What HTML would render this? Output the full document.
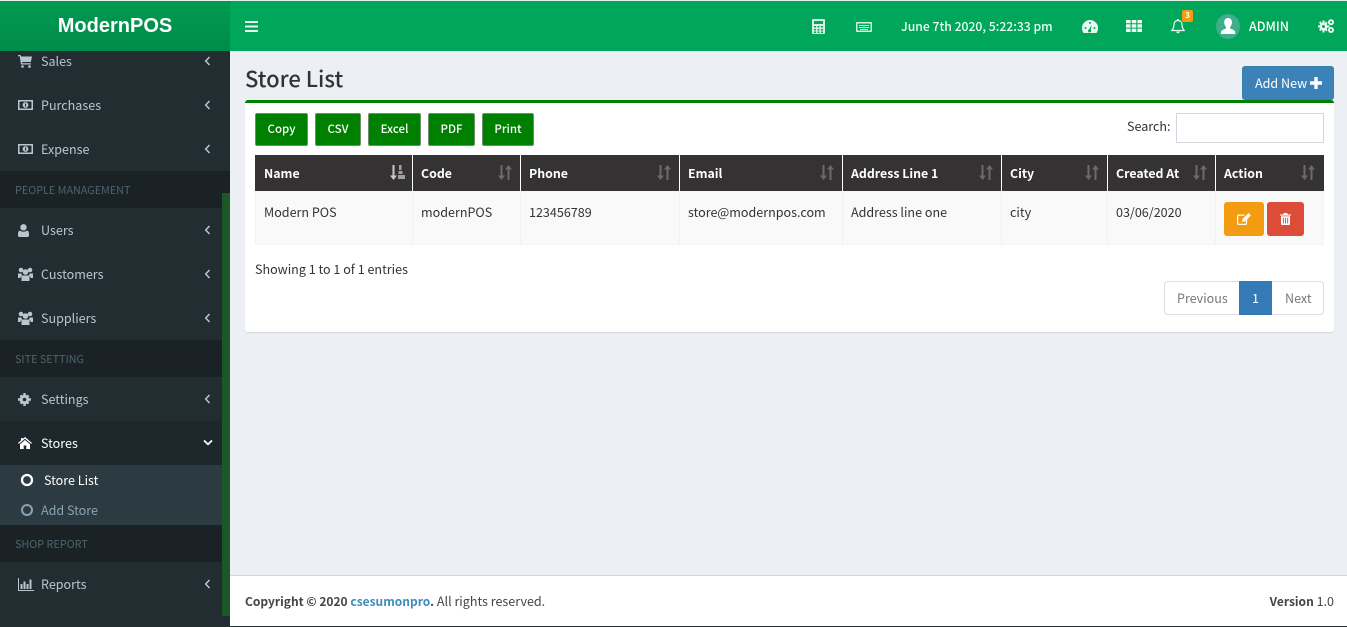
<!DOCTYPE html>
<html lang="en"><head><meta charset="utf-8"><title>Store List</title>
<style>
*{box-sizing:border-box}
html,body{margin:0;padding:0;width:1347px;height:627px;overflow:hidden;background:#ecf0f5}
body{position:relative;font-family:"Noto Sans CJK SC","Liberation Sans",sans-serif;font-size:12.55px;color:#333}
.a{position:absolute}
.t{position:absolute;white-space:nowrap;line-height:20px;height:20px}
svg{position:absolute;display:block}
.m{color:#b8c7ce}
.h{color:#4b646f;font-size:10.8px}
.th{color:#fff;font-weight:700;top:163px;font-size:12.35px}
.td{color:#333;top:202px}
.b{position:absolute;top:113px;height:33px;background:#008000;border:1px solid #6f8f6f;border-radius:2px;color:#fff;font-size:11.5px;line-height:31px;text-align:center;font-weight:500}
.hd{position:absolute;left:0;width:230px;height:37px;background:#1a2226}
.sep{position:absolute;top:155px;width:1px;height:36px;background:#fff}
.sepr{position:absolute;top:191px;width:1px;height:54px;background:#f1f1f1}
</style></head><body>

<!-- header -->
<div class="a" style="left:0;top:0;width:1347px;height:1px;background:#e6f3ec"></div>
<div class="a" style="left:230px;top:1px;width:1117px;height:50px;background:#00a65a"></div>
<div class="a" style="left:0;top:1px;width:230px;height:50px;background:linear-gradient(#009a50,#008b4b)"></div>
<div class="t" style="left:0;width:230px;text-align:center;top:11px;height:30px;line-height:30px;font-family:'Liberation Sans',sans-serif;font-weight:700;font-size:20px;color:#fff">ModernPOS</div>
<svg style="left:245px;top:21px" width="13" height="11" viewBox="0 0 13 11"><path d="M0 0h13v2H0zM0 4.500h13v2H0zM0 9h13v2H0z" fill="#e8f7ef"/></svg>

<svg style="left:812px;top:19px" width="13" height="15" viewBox="0 0 13 15"><path fill="#d5f0e2" fill-rule="evenodd" d="M1 0h11a1 1 0 0 1 1 1v13a1 1 0 0 1-1 1H1a1 1 0 0 1-1-1V1a1 1 0 0 1 1-1zM2 2v3h9V2zM2 7v1.500h2V7zm3.500 0v1.500h2V7zM9 7v1.500h2V7zM2 10v1.500h2V10zm3.500 0v1.500h2V10zM9 10v1.500h2V10zM2 12.500V14h2v-1.500zm3.500 0V14h2v-1.500zm3.500 0V14h2v-1.500z"/></svg>
<svg style="left:856px;top:22px" width="16" height="10" viewBox="0 0 16 10"><path fill="#d5f0e2" fill-rule="evenodd" d="M1 0h14a1 1 0 0 1 1 1v8a1 1 0 0 1-1 1H1a1 1 0 0 1-1-1V1a1 1 0 0 1 1-1zm.5 1.500v7h13v-7zM3 3h10v1H3zM3 5h10v1H3zM4 7h8v1H4z"/></svg>
<div class="t" style="left:901px;top:16px;color:#eafff3;font-size:12.2px;font-weight:500">June 7th 2020, 5:22:33 pm</div>

<svg style="left:1082px;top:20px" width="16" height="13" viewBox="0 0 16 13"><path fill="#eafaf2" fill-rule="evenodd" d="M8 0a8 8 0 0 1 8 8c0 2-.6 3.600-1.500 5h-13C.6 11.600 0 10 0 8a8 8 0 0 1 8-8zM8 2a1 1 0 1 0 0 2 1 1 0 0 0 0-2zM3.500 7a1 1 0 1 0 0 2 1 1 0 0 0 0-2zm9 0a1 1 0 1 0 0 2 1 1 0 0 0 0-2zM9.500 5 7 9.500a1.500 1.500 0 1 0 1.800.6z"/></svg>
<svg style="left:1126px;top:20px" width="16" height="12" viewBox="0 0 16 12"><path fill="#eafaf2" d="M0 0h4.600v3.300H0zM5.700 0h4.600v3.300H5.700zM11.400 0H16v3.300h-4.600zM0 4.300h4.600v3.300H0zM5.700 4.300h4.600v3.300H5.700zM11.400 4.300H16v3.300h-4.600zM0 8.600h4.600V12H0zM5.700 8.600h4.600V12H5.700zM11.400 8.600H16V12h-4.600z"/></svg>
<svg style="left:1171px;top:19px" width="14" height="15" viewBox="0 0 14 15"><path fill="none" stroke="#eafaf2" stroke-width="1.200" d="M7 1.500c-2.700 0-4 2-4 4.200 0 3-1 4.300-2.200 5.800h12.400C12 10 11 8.700 11 5.700c0-2.200-1.300-4.200-4-4.200z"/><path fill="#eafaf2" d="M5.300 12.500h3.400a1.700 1.700 0 0 1-3.400 0zM6.200 0h1.600v1.500H6.200z"/></svg>
<div class="a" style="left:1182px;top:10px;width:11px;height:12px;background:#f39c12;border-radius:2px;color:#fff;font-size:8px;font-weight:700;line-height:12px;text-align:center">3</div>
<div class="a" style="left:1216px;top:14px;width:24px;height:25px;border-radius:50%;background:#3fae8b;overflow:hidden"></div>
<svg style="left:1216px;top:14px" width="24" height="25" viewBox="0 0 24 25"><path fill="#fff" d="M12 4c2.700 0 4 2 4 4.500 0 2-1 3.500-1.800 4.500v1.500c2 1 5 1.500 5 4.200V20H5v-1.300c0-2.700 3-3.200 5-4.200V13c-.8-1-1.800-2.500-1.800-4.500C8.200 6 9.300 4 12 4z"/></svg>
<div class="t" style="left:1249px;top:16px;color:#fff;font-size:12.500px;font-weight:500">ADMIN</div>
<svg style="left:1318px;top:19px" width="16" height="14" viewBox="0 0 16 14"><g fill="#eafaf2"><circle cx="5.500" cy="7.500" r="4"/><path d="M4.500 1.500h2v12h-2zM-.5 6.500h12v2h-12zM1 3.700 2.400 2.300l7.200 8.800-1.400 1.400zM8.200 2.500l1.400 1.400-7.200 8.200L1 10.700z"/><circle cx="13" cy="3.200" r="3"/><circle cx="13" cy="11" r="3"/></g><circle cx="5.500" cy="7.500" r="1.500" fill="#00a65a"/><circle cx="13" cy="3.200" r="1.100" fill="#00a65a"/><circle cx="13" cy="11" r="1.100" fill="#00a65a"/></svg>

<!-- sidebar -->
<div class="a" style="left:0;top:51px;width:230px;height:575px;background:#222d32"></div>
<div class="a" style="left:0;top:421px;width:230px;height:44px;background:#1e282c"></div>
<div class="a" style="left:0;top:465px;width:230px;height:60px;background:#2c3b41"></div>
<div class="hd" style="top:171px"></div><div class="hd" style="top:340px"></div><div class="hd" style="top:525px"></div>
<div class="a" style="left:222px;top:193px;width:8px;height:423px;background:#1b5727"></div>
<div class="a" style="left:0;top:626px;width:1347px;height:1px;background:#222d32"></div>

<div class="t m" style="left:41px;top:51px">Sales</div>
<div class="t m" style="left:41px;top:95px">Purchases</div>
<div class="t m" style="left:41px;top:139px">Expense</div>
<div class="t h" style="left:15px;top:180px">PEOPLE MANAGEMENT</div>
<div class="t m" style="left:41px;top:220px">Users</div>
<div class="t m" style="left:41px;top:264px">Customers</div>
<div class="t m" style="left:41px;top:308px">Suppliers</div>
<div class="t h" style="left:15px;top:349px">SITE SETTING</div>
<div class="t m" style="left:41px;top:389px">Settings</div>
<div class="t" style="left:41px;top:433px;color:#fff">Stores</div>
<div class="t" style="left:44px;top:470px;color:#fff">Store List</div>
<div class="t" style="left:41px;top:500px;color:#8aa4af">Add Store</div>
<div class="t h" style="left:15px;top:534px">SHOP REPORT</div>
<div class="t m" style="left:41px;top:574px">Reports</div>

<!-- sidebar icons -->
<svg style="left:18px;top:55px" width="14" height="13" viewBox="0 0 14 13"><path fill="#b8c7ce" d="M0 0h2.500l.5 1.500h11l-1.200 5.500H4l.3 1.300h8.700v1.200H3L1.700 1.200H0z"/><circle cx="4.500" cy="11.500" r="1.300" fill="#b8c7ce"/><circle cx="11.500" cy="11.500" r="1.300" fill="#b8c7ce"/></svg>
<svg style="left:18px;top:100px" width="15" height="10" viewBox="0 0 15 10"><path fill="#b8c7ce" fill-rule="evenodd" d="M0 0h15v10H0zM2 1.500 1.500 2v6l.5.500h11l.5-.5V2l-.5-.500z"/><circle cx="7.500" cy="5" r="2.900" fill="#b8c7ce"/><path fill="#222d32" d="M7 3.500h1.100v3H7z"/></svg>
<svg style="left:18px;top:144px" width="15" height="10" viewBox="0 0 15 10"><path fill="#b8c7ce" fill-rule="evenodd" d="M0 0h15v10H0zM2 1.500 1.500 2v6l.5.500h11l.5-.5V2l-.5-.500z"/><circle cx="7.500" cy="5" r="2.900" fill="#b8c7ce"/><path fill="#222d32" d="M7 3.500h1.100v3H7z"/></svg>
<svg style="left:18px;top:224px" width="11" height="13" viewBox="0 0 11 13"><circle cx="5.500" cy="3.300" r="3.200" fill="#b8c7ce"/><path fill="#b8c7ce" d="M2 6.500c1 .9 2.200 1.200 3.500 1.200S8 7.400 9 6.500c1.300.3 2 1.500 2 3.500v1.500c0 .8-.6 1.500-1.500 1.500h-8C.6 13 0 12.300 0 11.500V10c0-2 .7-3.200 2-3.500z"/></svg>
<svg style="left:18px;top:267px" width="15" height="14" viewBox="0 0 15 14"><g fill="#b8c7ce"><circle cx="3" cy="3" r="2.300"/><circle cx="12" cy="3" r="2.300"/><circle cx="7.500" cy="5" r="2.800"/><path d="M0 6.500h3.500l.5 3H2.500v1.500H0zM11.500 6.500H15V11h-2.500V9.500H11zM3.500 8.500h8V14h-8z"/></g></svg>
<svg style="left:18px;top:311px" width="15" height="14" viewBox="0 0 15 14"><g fill="#b8c7ce"><circle cx="3" cy="3" r="2.300"/><circle cx="12" cy="3" r="2.300"/><circle cx="7.500" cy="5" r="2.800"/><path d="M0 6.500h3.500l.5 3H2.500v1.500H0zM11.500 6.500H15V11h-2.500V9.500H11zM3.500 8.500h8V14h-8z"/></g></svg>
<svg style="left:18px;top:393px" width="13" height="13" viewBox="0 0 13 13"><g fill="#b8c7ce"><path d="M5.300 0h2.400v13H5.300zM0 5.300h13v2.400H0zM1.600 3.300l1.700-1.700 8.100 8.100-1.700 1.700zM9.700 1.600l1.700 1.700-8.100 8.100-1.700-1.700z"/><circle cx="6.500" cy="6.500" r="4.700"/></g><circle cx="6.500" cy="6.500" r="1.800" fill="#222d32"/></svg>
<svg style="left:18px;top:437px" width="14" height="12" viewBox="0 0 14 12"><path fill="#fff" d="M7 0 14 6l-.8.900L7 1.700.8 6.900 0 6l3-2.600V1h1.800v.9zM2 7.300 7 3l5 4.300V12H8.300V8.500H5.700V12H2z"/></svg>
<svg style="left:18px;top:578px" width="16" height="13" viewBox="0 0 16 13"><path fill="#b8c7ce" d="M0 0h1v12h15v1H0zM2.500 6h2v5h-2zM5.500 3.500h2V11h-2zM8.500 6h2v5h-2zM11.500 1.500h2V11h-2z"/></svg>
<svg style="left:20px;top:473px" width="14" height="14" viewBox="0 0 14 14"><circle cx="7" cy="7" r="5" fill="none" stroke="#fff" stroke-width="2.300"/></svg>
<svg style="left:20px;top:503px" width="14" height="14" viewBox="0 0 14 14"><circle cx="7" cy="7" r="5" fill="none" stroke="#8aa4af" stroke-width="2"/></svg>
<svg style="left:204px;top:56px" width="7" height="10" viewBox="0 0 7 10"><path d="M5.500 1 1.700 5l3.800 4" fill="none" stroke="#b8c7ce" stroke-width="1.500"/></svg>
<svg style="left:204px;top:100px" width="7" height="10" viewBox="0 0 7 10"><path d="M5.500 1 1.700 5l3.800 4" fill="none" stroke="#b8c7ce" stroke-width="1.500"/></svg>
<svg style="left:204px;top:144px" width="7" height="10" viewBox="0 0 7 10"><path d="M5.500 1 1.700 5l3.800 4" fill="none" stroke="#b8c7ce" stroke-width="1.500"/></svg>
<svg style="left:204px;top:225px" width="7" height="10" viewBox="0 0 7 10"><path d="M5.500 1 1.700 5l3.800 4" fill="none" stroke="#b8c7ce" stroke-width="1.500"/></svg>
<svg style="left:204px;top:269px" width="7" height="10" viewBox="0 0 7 10"><path d="M5.500 1 1.700 5l3.800 4" fill="none" stroke="#b8c7ce" stroke-width="1.500"/></svg>
<svg style="left:204px;top:313px" width="7" height="10" viewBox="0 0 7 10"><path d="M5.500 1 1.700 5l3.800 4" fill="none" stroke="#b8c7ce" stroke-width="1.500"/></svg>
<svg style="left:204px;top:394px" width="7" height="10" viewBox="0 0 7 10"><path d="M5.500 1 1.700 5l3.800 4" fill="none" stroke="#b8c7ce" stroke-width="1.500"/></svg>
<svg style="left:204px;top:579px" width="7" height="10" viewBox="0 0 7 10"><path d="M5.500 1 1.700 5l3.800 4" fill="none" stroke="#b8c7ce" stroke-width="1.500"/></svg>
<svg style="left:203px;top:439px" width="10" height="7" viewBox="0 0 10 7"><path d="M1 1.500 5 5.300l4-3.800" fill="none" stroke="#fff" stroke-width="1.700"/></svg>

<!-- content -->
<div class="t" style="left:245px;top:63px;height:30px;line-height:30px;font-size:22px;font-weight:500;color:#333">Store List</div>
<div class="a" style="left:245px;top:100px;width:1089px;height:232px;background:#fff;border-top:3px solid #008000;border-radius:3px;box-shadow:0 1px 1px rgba(0,0,0,.1)"></div>
<div class="a" style="left:1242px;top:66px;width:92px;height:34px;background:#3c82b8;border:1px solid #367fa9;border-radius:3px"></div>
<div class="t" style="left:1255px;top:73px;color:#fff">Add New</div>
<svg style="left:1310px;top:77px" width="12" height="12" viewBox="0 0 12 12"><path fill="#fff" d="M4.300 0h3.400v4.300H12v3.400H7.700V12H4.300V7.700H0V4.300h4.300z"/></svg>

<div class="b" style="left:255px;width:53px">Copy</div>
<div class="b" style="left:315px;width:46px">CSV</div>
<div class="b" style="left:368px;width:53px">Excel</div>
<div class="b" style="left:428px;width:47px">PDF</div>
<div class="b" style="left:482px;width:52px">Print</div>
<div class="t" style="left:1127px;top:116px">Search:</div>
<div class="a" style="left:1176px;top:113px;width:148px;height:30px;background:#fff;border:1px solid #d2d6de"></div>

<!-- table -->
<div class="a" style="left:255px;top:155px;width:1069px;height:36px;background:#343232"></div>
<div class="a" style="left:255px;top:191px;width:1069px;height:54px;background:#f9f9f9;border:1px solid #f4f4f4"></div>
<div class="sep" style="left:412px"></div><div class="sep" style="left:520px"></div><div class="sep" style="left:679px"></div><div class="sep" style="left:842px"></div><div class="sep" style="left:1001px"></div><div class="sep" style="left:1107px"></div><div class="sep" style="left:1215px"></div>
<div class="sepr" style="left:412px"></div><div class="sepr" style="left:520px"></div><div class="sepr" style="left:679px"></div><div class="sepr" style="left:842px"></div><div class="sepr" style="left:1001px"></div><div class="sepr" style="left:1107px"></div><div class="sepr" style="left:1215px"></div>

<div class="t th" style="left:264px">Name</div>
<div class="t th" style="left:421px">Code</div>
<div class="t th" style="left:529px">Phone</div>
<div class="t th" style="left:688px">Email</div>
<div class="t th" style="left:851px">Address Line 1</div>
<div class="t th" style="left:1010px">City</div>
<div class="t th" style="left:1116px">Created At</div>
<div class="t th" style="left:1224px">Action</div>

<svg style="left:390px;top:165px" width="15" height="15" viewBox="0 0 15 15"><path fill="#c9c9c9" d="M2.500 0h2v10.500H7L3.500 15 0 10.500h2.500z"/><path fill="#a0a0a0" d="M9 0h2.500v5H9zM8.500 6h4v3h-4zM8 10h7v4H8z"/></svg>
<svg style="left:498px;top:165px" width="14" height="15" viewBox="0 0 14 15"><path fill="#6b6969" d="M2.500 0h2v10.500H7L3.500 15 0 10.500h2.500zM9.500 15h2V4.500H14L10.500 0 7 4.500h2.500z"/></svg>
<svg style="left:657px;top:165px" width="14" height="15" viewBox="0 0 14 15"><path fill="#6b6969" d="M2.500 0h2v10.500H7L3.500 15 0 10.500h2.500zM9.500 15h2V4.500H14L10.500 0 7 4.500h2.500z"/></svg>
<svg style="left:820px;top:165px" width="14" height="15" viewBox="0 0 14 15"><path fill="#6b6969" d="M2.500 0h2v10.500H7L3.500 15 0 10.500h2.500zM9.500 15h2V4.500H14L10.500 0 7 4.500h2.500z"/></svg>
<svg style="left:979px;top:165px" width="14" height="15" viewBox="0 0 14 15"><path fill="#6b6969" d="M2.500 0h2v10.500H7L3.500 15 0 10.500h2.500zM9.500 15h2V4.500H14L10.500 0 7 4.500h2.500z"/></svg>
<svg style="left:1085px;top:165px" width="14" height="15" viewBox="0 0 14 15"><path fill="#6b6969" d="M2.500 0h2v10.500H7L3.500 15 0 10.500h2.500zM9.500 15h2V4.500H14L10.500 0 7 4.500h2.500z"/></svg>
<svg style="left:1193px;top:165px" width="14" height="15" viewBox="0 0 14 15"><path fill="#6b6969" d="M2.500 0h2v10.500H7L3.500 15 0 10.500h2.500zM9.500 15h2V4.500H14L10.500 0 7 4.500h2.500z"/></svg>
<svg style="left:1301px;top:165px" width="14" height="15" viewBox="0 0 14 15"><path fill="#6b6969" d="M2.500 0h2v10.500H7L3.500 15 0 10.500h2.500zM9.500 15h2V4.500H14L10.500 0 7 4.500h2.500z"/></svg>

<div class="t td" style="left:264px">Modern POS</div>
<div class="t td" style="left:421px">modernPOS</div>
<div class="t td" style="left:529px">123456789</div>
<div class="t td" style="left:688px">store@modernpos.com</div>
<div class="t td" style="left:851px">Address line one</div>
<div class="t td" style="left:1010px">city</div>
<div class="t td" style="left:1116px">03/06/2020</div>

<div class="a" style="left:1224px;top:202px;width:40px;height:34px;background:#f39c12;border-radius:3px"></div>
<div class="a" style="left:1267px;top:202px;width:37px;height:34px;background:#dd4b39;border-radius:3px"></div>
<svg style="left:1237px;top:213px" width="14" height="12" viewBox="0 0 14 12"><path fill="none" stroke="#fff" stroke-width="1.200" d="M9.500 6.500V10c0 .8-.5 1.400-1.300 1.400H2c-.8 0-1.400-.6-1.400-1.400V3.500c0-.8.600-1.400 1.400-1.400h5.500"/><path fill="#fff" d="M11.500 0 14 2.500 8 8.500 5 9l.5-3z"/></svg>
<svg style="left:1280px;top:213px" width="11" height="12" viewBox="0 0 11 12"><path fill="#fff" fill-rule="evenodd" d="M4 0h3l1 1.500h3v1.100H0V1.500h3zM1 3.300h9V11a1 1 0 0 1-1 1H2a1 1 0 0 1-1-1zM3 4.800v5.700h.9V4.800zm2.100 0v5.700H6V4.800zm2.100 0v5.700h.9V4.800z"/></svg>

<div class="t" style="left:255px;top:259px">Showing 1 to 1 of 1 entries</div>

<div class="a" style="left:1164px;top:281px;width:160px;height:34px;background:#fff;border:1px solid #ddd;border-radius:4px"></div>
<div class="a" style="left:1239px;top:281px;width:33px;height:34px;background:#337ab7"></div>
<div class="t" style="left:1177px;top:288px;color:#777">Previous</div>
<div class="t" style="left:1239px;width:33px;text-align:center;top:288px;color:#fff">1</div>
<div class="t" style="left:1285px;top:288px;color:#777">Next</div>

<!-- footer -->
<div class="a" style="left:230px;top:575px;width:1117px;height:51px;background:#fff;border-top:1px solid #d2d6de"></div>
<div class="t" style="left:245px;top:591px;color:#444"><b style="font-weight:700;font-size:12px">Copyright © 2020 <span style="color:#3c8dbc">csesumonpro</span>.</b> All rights reserved.</div>
<div class="t" style="right:13px;top:591px;color:#444"><b style="font-weight:700;font-size:12px">Version</b> 1.0</div>
</body></html>
